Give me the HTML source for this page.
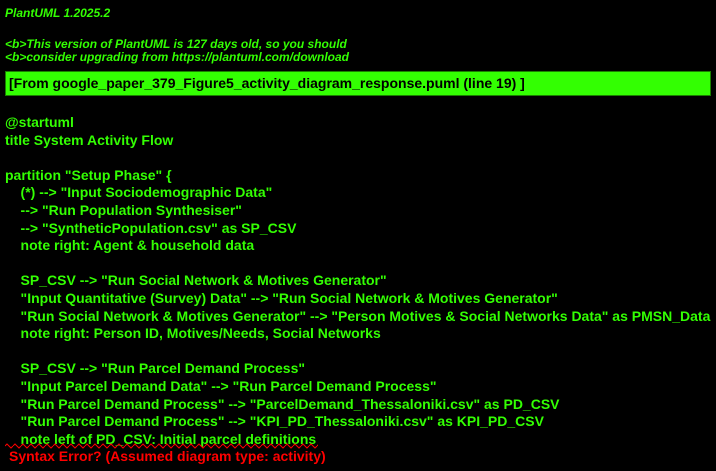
<!DOCTYPE html>
<html><head><meta charset="utf-8"><style>
html,body{margin:0;padding:0;background:#000;width:716px;height:471px;overflow:hidden;position:relative;font-family:"Liberation Sans",sans-serif}
.hdr{position:absolute;left:5px;color:#33ff02;font-weight:bold;font-style:italic;font-size:12px;white-space:nowrap}
.box{position:absolute;left:5px;top:71px;width:704px;height:23px;background:#33ff02;border:1px solid #1a8000;box-sizing:content-box}
.box span{position:absolute;left:3px;top:3px;font-weight:bold;font-size:14px;color:#000;white-space:nowrap}
.code{position:absolute;left:5px;top:114px;color:#33ff02;font-weight:bold;font-size:14px;line-height:17.6px;white-space:pre}
.err{position:absolute;left:9px;top:448px;color:#ff0000;font-weight:bold;font-size:14px;white-space:nowrap}
</style></head><body>
<div class="hdr" style="top:6px">PlantUML 1.2025.2</div>
<div class="hdr" style="top:37px">&lt;b&gt;This version of PlantUML is 127 days old, so you should</div>
<div class="hdr" style="top:50px">&lt;b&gt;consider upgrading from https://plantuml.com/download</div>
<div class="box"><span>[From google_paper_379_Figure5_activity_diagram_response.puml (line 19) ]</span></div>
<div class="code">@startuml
title System Activity Flow

partition "Setup Phase" {
    (*) --&gt; "Input Sociodemographic Data"
    --&gt; "Run Population Synthesiser"
    --&gt; "SyntheticPopulation.csv" as SP_CSV
    note right: Agent &amp; household data

    SP_CSV --&gt; "Run Social Network &amp; Motives Generator"
    "Input Quantitative (Survey) Data" --&gt; "Run Social Network &amp; Motives Generator"
    "Run Social Network &amp; Motives Generator" --&gt; "Person Motives &amp; Social Networks Data" as PMSN_Data
    note right: Person ID, Motives/Needs, Social Networks

    SP_CSV --&gt; "Run Parcel Demand Process"
    "Input Parcel Demand Data" --&gt; "Run Parcel Demand Process"
    "Run Parcel Demand Process" --&gt; "ParcelDemand_Thessaloniki.csv" as PD_CSV
    "Run Parcel Demand Process" --&gt; "KPI_PD_Thessaloniki.csv" as KPI_PD_CSV
    note left of PD_CSV: Initial parcel definitions</div>
<svg style="position:absolute;left:0;top:443px" width="330" height="6"><defs><pattern id="w" x="5" y="0" width="8" height="6" patternUnits="userSpaceOnUse"><path d="M0 3 L2 1 L6 5 L8 3" fill="none" stroke="#ff0000" stroke-width="1"/></pattern></defs><rect x="5" y="0" width="313" height="6" fill="url(#w)"/></svg>
<div class="err">Syntax Error? (Assumed diagram type: activity)</div>
</body></html>
